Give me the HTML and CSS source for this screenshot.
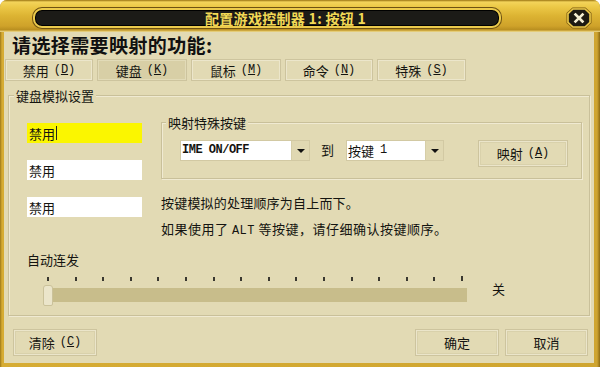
FILE: index.html
```html
<!DOCTYPE html>
<html lang="zh-CN">
<head>
<meta charset="utf-8">
<title>配置游戏控制器</title>
<link rel="stylesheet" href="styles.css">
</head>
<body>
<div class="window">
  <div class="titlebar">
    <div class="title-pill"><span class="title-text">配置游戏控制器 1: 按钮 1</span></div>
    <div class="close" aria-label="关闭">
      <svg width="26" height="22" viewBox="0 0 26 22">
        <polygon points="6.5,0.5 19.5,0.5 25.5,6 25.5,16 19.5,21.5 6.5,21.5 0.5,16 0.5,6" fill="#7a5a10"/>
        <polygon points="7,2 19,2 24,6.7 24,15.3 19,20 7,20 2,15.3 2,6.7" fill="#1d1a12" stroke="#ecc94a" stroke-width="1.6"/>
        <path d="M9.5 7.5 L16.5 14.5 M16.5 7.5 L9.5 14.5" stroke="#f2ecd0" stroke-width="2.6" stroke-linecap="square"/>
      </svg>
    </div>
  </div>
  <div class="client">
    <h1 class="prompt">请选择需要映射的功能:</h1>
    <div class="tabs">
      <div class="tab w88">禁用<span class="mn">(<u>D</u>)</span></div>
      <div class="tab w90 selected">键盘<span class="mn">(<u>K</u>)</span></div>
      <div class="tab w90">鼠标<span class="mn">(<u>M</u>)</span></div>
      <div class="tab w88">命令<span class="mn">(<u>N</u>)</span></div>
      <div class="tab w89">特殊<span class="mn">(<u>S</u>)</span></div>
    </div>
    <fieldset class="group">
      <legend>键盘模拟设置</legend>
      <div class="group-body">
        <div class="kb">
          <div class="slots">
            <div class="slot active">禁用<span class="caret"></span></div>
            <div class="slot">禁用</div>
            <div class="slot">禁用</div>
          </div>
          <div class="side">
            <fieldset class="special">
              <legend>映射特殊按键</legend>
              <div class="map-row">
                <div class="combo c1"><span class="field mono">IME ON/OFF</span><span class="drop"><i></i></span></div>
                <span class="to">到</span>
                <div class="combo c2"><span class="field">按键<span class="num">1</span></span><span class="drop"><i></i></span></div>
                <div class="btn map">映射<span class="mn">(<u>A</u>)</span></div>
              </div>
            </fieldset>
            <p class="note n1">按键模拟的处理顺序为自上而下。</p>
            <p class="note n2">如果使用了 <span class="alt">ALT</span> 等按键，请仔细确认按键顺序。</p>
          </div>
        </div>
        <div class="auto">
          <div class="auto-label">自动连发</div>
          <div class="ticks"><i></i><i></i><i></i><i></i><i></i><i></i><i></i><i></i><i></i><i></i><i></i><i></i><i></i><i></i><i></i><i class="last"></i></div>
          <div class="slider-row">
            <div class="track"><span class="thumb"></span></div>
            <span class="off">关</span>
          </div>
        </div>
      </div>
    </fieldset>
    <div class="actions">
      <div class="btn w84">清除<span class="mn">(<u>C</u>)</span></div>
      <div class="spacer"></div>
      <div class="btn w84">确定</div>
      <div class="btn w83">取消</div>
    </div>
  </div>
</div>
</body>
</html>
```

FILE: styles.css
```css
* { box-sizing: border-box; }
html, body { margin: 0; padding: 0; }
body {
  width: 600px;
  height: 367px;
  overflow: hidden;
  background: #ffffff;
  font-family: "Noto Sans CJK SC", "Noto Sans", sans-serif;
  font-size: 13px;
  color: #141410;
}

.window {
  width: 600px;
  height: 367px;
  display: flex;
  flex-direction: column;
  background: linear-gradient(90deg, #9c7818 0, #d6ac34 2px, #cfa530 597px, #8c6a14 600px);
  border-radius: 7px 7px 0 0;
  overflow: hidden;
}

.titlebar {
  height: 32px;
  flex: none;
  display: flex;
  align-items: flex-start;
  background: linear-gradient(180deg, #9a7412 0, #f3d45a 2px, #ecc846 7px, #dcb332 16px, #cfa22a 26px, #b88e20 30px, #e0c060 31px, #e8d890 32px);
}

.title-pill {
  margin: 8px 0 0 33px;
  width: 468px;
  height: 20px;
  background: #1c1b17;
  border: 2px solid #eccb4c;
  border-radius: 9px;
  box-shadow: 0 0 0 1px #6e5212, inset 0 0 0 1px #000;
  display: flex;
  align-items: center;
  padding-left: 170px;
}
.title-text {
  color: #f2d955;
  font-weight: 700;
  font-size: 14px;
  line-height: 16px;
  letter-spacing: 0.3px;
  white-space: nowrap;
}

.close {
  margin: 7px 8px 0 auto;
  width: 26px;
  height: 22px;
  display: flex;
}

.client {
  flex: 1;
  margin: 0 6px 4px 4px;
  background: #e2dab4;
  display: flex;
  flex-direction: column;
}

.prompt {
  margin: 2px 0 0 8px;
  height: 22px;
  font-size: 19px;
  line-height: 22px;
  font-weight: 700;
  letter-spacing: 0.4px;
  color: #111;
}

.tabs {
  margin-top: 3px;
  padding-left: 1px;
  display: flex;
  gap: 4px;
}
.tab {
  height: 22px;
  display: flex;
  align-items: center;
  justify-content: center;
  background: #e2dab4;
  border: 1px solid #cdc49e;
  box-shadow: inset 0 0 0 1px #ece6cb;
  font-size: 13px;
  line-height: 15px;
}
.tab.selected { background: #d8cfa6; box-shadow: inset 0 0 0 1px #e2dbb8; }
.w88 { width: 88px; }
.w89 { width: 89px; }
.w90 { width: 90px; }
.w84 { width: 84px; }
.w83 { width: 83px; }

.mn { font-family: "Liberation Mono", monospace; font-size: 12px; margin-left: 5px; }
.num { font-family: "Liberation Mono", monospace; font-size: 12px; margin-left: 6px; }
.alt { font-family: "Liberation Mono", monospace; font-size: 12px; }

fieldset {
  margin: 0;
  padding: 0;
  min-width: 0;
  border: 1px solid #c9c09a;
  box-shadow: inset 1px 1px 0 #f0ead2, 1px 1px 0 #f0ead2;
}
legend {
  padding: 0 2px;
  font-size: 13px;
  line-height: 15px;
  background: #e2dab4;
}

.group {
  margin: 7px 4px 0 4px;
}
.group legend { margin-left: 5px; }
.group-body { padding: 0 7px 13px 18px; }

.kb {
  display: grid;
  grid-template-columns: 115px 1fr;
  column-gap: 19px;
}

.slots {
  padding-top: 20px;
  display: flex;
  flex-direction: column;
  gap: 17px;
}
.slot {
  height: 20px;
  background: #ffffff;
  padding-left: 2px;
  display: flex;
  align-items: center;
  font-size: 13px;
  line-height: 15px;
}
.slot.active { background: #fbf600; }
.caret {
  width: 1px;
  height: 14px;
  background: #222;
  margin-left: 1px;
}

.side { padding-top: 12px; }
.special legend { margin-left: 4px; }
.map-row {
  padding: 10px 13px 11px 18px;
  display: flex;
  align-items: flex-start;
}
.combo {
  height: 21px;
  display: flex;
  border: 1px solid #d2c9a3;
  background: #e0d8b2;
}
.combo .field {
  flex: 1;
  background: #fff;
  display: flex;
  align-items: center;
  padding-left: 1px;
  font-size: 13px;
  line-height: 15px;
  white-space: nowrap;
}
.combo .field.mono {
  font-family: "Liberation Mono", monospace;
  font-weight: 700;
  font-size: 12px;
  letter-spacing: -0.5px;
}
.c1 { width: 130px; }
.c2 { width: 98px; }
.drop {
  width: 18px;
  display: flex;
  align-items: center;
  justify-content: center;
  border-left: 1px solid #d6cea8;
}
.drop i {
  width: 0;
  height: 0;
  border-left: 4px solid transparent;
  border-right: 4px solid transparent;
  border-top: 4px solid #111;
}
.to {
  margin: 2px 12px 0 11px;
  font-size: 13px;
  line-height: 15px;
}

.btn {
  height: 27px;
  display: flex;
  align-items: center;
  justify-content: center;
  background: #e2dab4;
  border: 1px solid #cdc49e;
  box-shadow: inset 0 0 0 1px #ebe5ca, inset 0 0 0 2px #d9d1ab;
  font-size: 13px;
  line-height: 15px;
}
.btn.map { width: 90px; margin-left: auto; }

.note {
  margin: 0;
  font-size: 13px;
  line-height: 15px;
  white-space: nowrap;
}
.n1 { margin-top: 16px; letter-spacing: 0.2px; }
.n2 { margin-top: 11px; letter-spacing: 0.5px; }

.auto { padding-top: 13px; }
.auto-label { font-size: 13px; line-height: 15px; }
.ticks {
  margin: 9px 0 0 20px;
  width: 416px;
  height: 5px;
  display: flex;
  justify-content: space-between;
  align-items: flex-end;
}
.ticks i {
  width: 2px;
  height: 4px;
  background: #3a3830;
}
.ticks i.last { height: 5px; }

.slider-row {
  margin-top: 2px;
  display: flex;
  align-items: flex-start;
}
.track {
  margin: 5px 0 0 16px;
  width: 424px;
  height: 14px;
  background: #c8bd8b;
  display: flex;
  align-items: center;
}
.thumb {
  width: 10px;
  height: 21px;
  flex: none;
  background: #ebe5ca;
  border: 1px solid #cbc29a;
  border-radius: 3px 3px 2px 2px;
}
.off {
  margin: -2px 0 0 25px;
  font-size: 13px;
  line-height: 15px;
}

.actions {
  margin-top: 13px;
  padding: 0 6px 0 9px;
  display: flex;
  gap: 6px;
}
.spacer { flex: 1; }
```
